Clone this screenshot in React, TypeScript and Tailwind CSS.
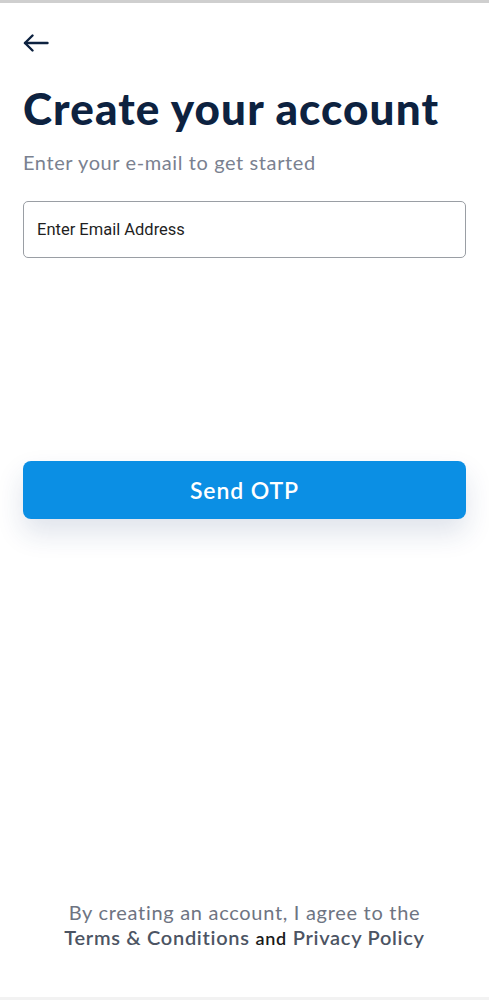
import { useState } from "react"

export default function App() {
  const [email, setEmail] = useState("")

  return (
    <div className="h-[1000px] w-full flex flex-col bg-white border-t-[3px] border-[#cfcfcf] font-['Lato',sans-serif]">
      <div className="flex-1 flex flex-col px-[23px]">
        <button type="button" className="mt-[30px] w-[26px] h-[20px] text-[#0d2240]" aria-label="Back">
          <svg viewBox="0 0 26 18" className="w-[26px] h-[18px]" fill="none" stroke="currentColor" strokeWidth="2.4" strokeLinecap="round" strokeLinejoin="round">
            <path d="M24.5 9H2" />
            <path d="M9.5 1.5L2 9l7.5 7.5" />
          </svg>
        </button>

        <h1 className="mt-[28px] text-[44px] leading-[54px] font-black text-[#0d2240] tracking-[1.1px]">
          Create your account
        </h1>
        <p className="mt-[14px] text-[20px] leading-[26px] text-[#7a8190] tracking-[0.6px]">
          Enter your e-mail to get started
        </p>

        <input
          type="email"
          value={email}
          onChange={(e) => setEmail(e.target.value)}
          placeholder="Enter Email Address"
          className="mt-[26px] h-[57px] w-full rounded-[5px] border border-[#9a9ea4] px-[13px] text-[16.5px] font-['Roboto',sans-serif] text-[#1f1f1f] placeholder:text-[#1f1f1f] outline-none"
        />

        <button
          type="button"
          className="mt-[203px] h-[58px] w-full rounded-[8px] bg-[#0b8fe4] text-white text-[23px] font-semibold tracking-[0.9px] shadow-[0_14px_28px_rgba(30,60,110,0.14)]"
        >
          Send OTP
        </button>

        <div className="mt-auto mb-[46px] text-center text-[20px] leading-[25px] tracking-[0.7px]">
          <p className="text-[#6e7482]">By creating an account, I agree to the</p>
          <p>
            <span className="font-semibold text-[#4c5463]">Terms &amp; Conditions</span>{" "}
            <span className="text-[18px] font-semibold text-[#1a1a1a]">and</span>{" "}
            <span className="font-semibold text-[#4c5463]">Privacy Policy</span>
          </p>
        </div>
      </div>
      <div className="h-[3px] bg-[#f2f2f2]" />
    </div>
  )
}
